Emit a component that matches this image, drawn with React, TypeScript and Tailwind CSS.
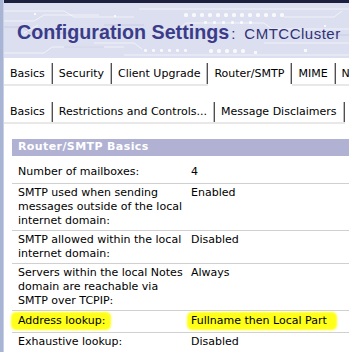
import React from "react";

type Tab = { label: string; active?: boolean };

const tabs1: Tab[] = [
  { label: "Basics" },
  { label: "Security" },
  { label: "Client Upgrade" },
  { label: "Router/SMTP", active: true },
  { label: "MIME" },
  { label: "N" },
];

const tabs2: Tab[] = [
  { label: "Basics" },
  { label: "Restrictions and Controls..." },
  { label: "Message Disclaimers" },
];

function TabRow({ tabs, h }: { tabs: Tab[]; h: "a" | "b" }) {
  return (
    <div className="flex whitespace-nowrap">
      {tabs.map((t, i) => (
        <div key={i} className="flex flex-col shrink-0">
          <div
            className={
              (h === "a" ? "h-[21px] " : "h-[20px] ") +
              "flex items-center pl-[6px] pr-[7px] border-r border-[#505050] shadow-[inset_-1px_0_0_#bcbcbc] leading-[14px]"
            }
          >
            {t.label}
          </div>
          <div className={"h-[2px] " + (t.active ? "bg-white" : "bg-[#e8e8e8]")} />
        </div>
      ))}
    </div>
  );
}

function Banner() {
  const dotsTop = Array.from({ length: 13 }, (_, i) => 180 + i * 8);
  const dotsMid = Array.from({ length: 6 }, (_, i) => 200 + i * 9);
  const dotsBot = Array.from({ length: 6 }, (_, i) => 140 + i * 8);
  const dotsBot2 = Array.from({ length: 5 }, (_, i) => 205 + i * 8);
  return (
    <svg
      className="absolute inset-0"
      width="345"
      height="55"
      viewBox="0 0 345 55"
      aria-hidden="true"
    >
      <g stroke="#ffffff" strokeOpacity="0.6" fill="none" strokeWidth="1">
        <path d="M0 8 H60 L70 14 H130" />
        <path d="M0 18 H30 L40 12 H95" />
        <path d="M135 6 H345" />
        <path d="M150 26 H175 L182 20 H260 L268 26 H345" />
        <path d="M0 50 H40 L48 44 H120" />
        <path d="M120 52 H345" />
        <path d="M260 40 H345" />
        <path d="M20 30 L34 22" />
        <path d="M90 40 H130 L138 46" />
        <path d="M280 14 H330 L338 8" />
      </g>
      <g stroke="#c5c8e1" strokeOpacity="0.85" fill="none" strokeWidth="1">
        <path d="M0 24 H18 L26 30 H70" />
        <path d="M100 22 H140" />
        <path d="M290 32 H345" />
        <path d="M60 44 H100" />
      </g>
      <g fill="#ffffff" fillOpacity="0.8">
        {dotsTop.map((x) => (
          <rect key={"t" + x} x={x} y={10} width="4" height="4" rx="1.5" />
        ))}
        {dotsMid.map((x) => (
          <rect key={"m" + x} x={x} y={18} width="3" height="3" rx="1" />
        ))}
        {dotsBot.map((x) => (
          <rect key={"b" + x} x={x} y={46} width="3" height="3" rx="1" />
        ))}
        {dotsBot2.map((x) => (
          <rect key={"c" + x} x={x} y={46} width="4" height="4" rx="1.5" />
        ))}
        <rect x="30" y="10" width="2" height="2" />
        <rect x="75" y="28" width="2" height="2" />
        <rect x="110" y="12" width="2" height="2" />
        <rect x="250" y="48" width="3" height="3" />
        <rect x="300" y="46" width="3" height="3" />
        <rect x="320" y="22" width="2" height="2" />
      </g>
    </svg>
  );
}

type Row = { label: string[]; value: string; hl?: boolean; first?: boolean };

const rows: Row[] = [
  { label: ["Number of mailboxes:"], value: "4", first: true },
  {
    label: ["SMTP used when sending", "messages outside of the local", "internet domain:"],
    value: "Enabled",
  },
  { label: ["SMTP allowed within the local", "internet domain:"], value: "Disabled" },
  {
    label: ["Servers within the local Notes", "domain are reachable via", "SMTP over TCPIP:"],
    value: "Always",
  },
  { label: ["Address lookup:"], value: "Fullname then Local Part", hl: true },
  { label: ["Exhaustive lookup:"], value: "Disabled" },
];

export default function App() {
  return (
    <div className="w-[349px] h-[352px] overflow-hidden bg-white flex font-['DejaVu_Sans',sans-serif] text-[11px] text-black">
      <div className="w-[3px] shrink-0 bg-[#a8b4d4] border-r border-[#c9d0e5] box-content" />
      <div className="flex-1 min-w-0 flex flex-col">
        <div className="h-[3px] bg-[#1d1f3e]" />
        <div className="relative h-[55px] bg-[#dcdfef] overflow-hidden">
          <Banner />
          <div className="relative flex items-baseline pt-[20px] pl-[13px] whitespace-nowrap font-['Liberation_Sans',Arial,sans-serif] text-[#3a3c8a]">
            <span className="text-[19.7px] leading-[19px] font-bold">Configuration Settings</span>
            <span className="text-[15px] leading-[19px] ml-[2px] text-[#303178]">:</span>
            <span className="text-[15px] leading-[19px] tracking-[0.5px] ml-[9px] text-[#303178]">
              CMTCCluster
            </span>
          </div>
        </div>
        <div className="mt-[5px]">
          <TabRow tabs={tabs1} h="a" />
        </div>
        <div className="mt-[16px]">
          <TabRow tabs={tabs2} h="b" />
        </div>
        <div className="ml-[8px] mt-[15px]">
          <div className="h-[17px] bg-[#b1b1d3] text-white font-bold pl-[6px] flex items-center tracking-[0.4px] whitespace-nowrap">
            Router/SMTP Basics
          </div>
          <div className="mt-[7px]">
            {rows.map((r, i) => (
              <div
                key={i}
                className={
                  "grid grid-cols-[179px_1fr] leading-[14px] whitespace-nowrap " +
                  (r.first ? "" : "border-t border-[#d0d0d0] ") +
                  (r.hl ? "pt-[3px] pb-[4px]" : r.first ? "pt-[2px] pb-[4px]" : "pt-[2px] pb-[2px]")
                }
              >
                <div className="pl-[6px]">
                  {r.hl ? (
                    <span className="inline-block bg-[#ffff1a] shadow-[0_0_2px_2px_#ffff1a] -ml-[5px] pl-[5px] pr-[3px] rounded-[3px]">
                      {r.label[0]}
                    </span>
                  ) : (
                    r.label.map((l, j) => <div key={j}>{l}</div>)
                  )}
                </div>
                <div>
                  {r.hl ? (
                    <span className="inline-block bg-[#ffff1a] shadow-[0_0_2px_2px_#ffff1a] -ml-[2px] pl-[2px] pr-[8px] rounded-[3px]">
                      {r.value}
                    </span>
                  ) : (
                    r.value
                  )}
                </div>
              </div>
            ))}
          </div>
        </div>
      </div>
    </div>
  );
}
